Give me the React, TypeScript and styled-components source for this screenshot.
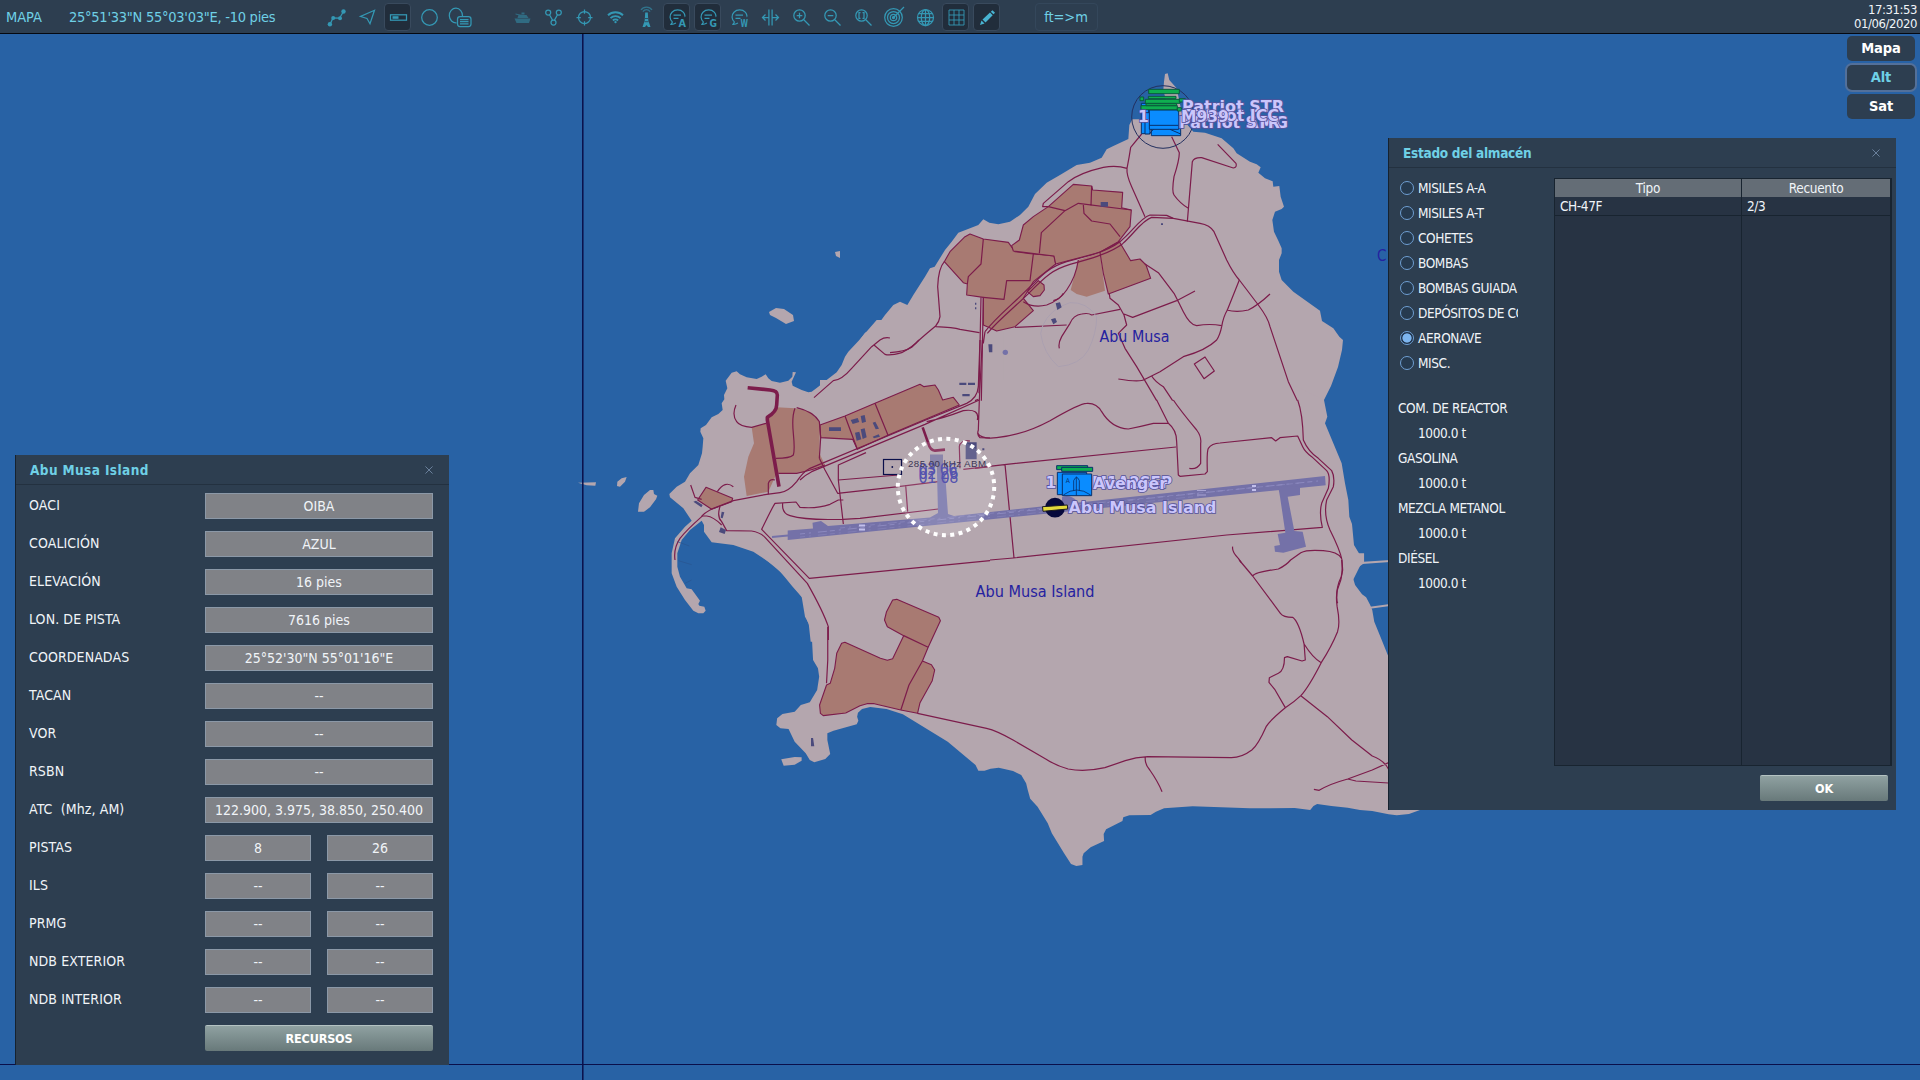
import React from "react";
import styled, { createGlobalStyle, css } from "styled-components";

const sans = `"DejaVu Sans Condensed", "DejaVu Sans", sans-serif`;
const wide = `"DejaVu Sans", sans-serif`;

const c = {
  sea: "#2862a5",
  land: "#b4a6ae",
  urban: "#a87a72",
  road: "#7c1c4b",
  strip: "#7471a8",
  building: "#4b4a7c",
  panel: "#2d3e50",
  panelDark: "#273343",
  teal: "#3498b4",
  title: "#6fd0e6",
};

const Global = createGlobalStyle`
  html, body { margin: 0; background: ${c.sea}; }
  body { overflow: hidden; font-family: ${sans}; font-stretch: condensed; color: #f0f4f8; }
  * { box-sizing: border-box; }
`;

const Screen = styled.div`
  position: relative;
  width: 1920px;
  height: 1080px;
  display: flex;
  flex-direction: column;
  overflow: hidden;
  background: ${c.sea};
`;

/* ---------- toolbar ---------- */

const Toolbar = styled.header`
  position: relative;
  display: flex;
  align-items: center;
  height: 34px;
  flex: none;
  padding: 0 3px 0 6px;
  background: ${c.panel};
  border-bottom: 1px solid #05080f;
`;

const ToolText = styled.span<{ $w: number; $track: number }>`
  width: ${(p) => p.$w}px;
  flex: none;
  color: ${c.title};
  font-size: 14.5px;
  letter-spacing: ${(p) => p.$track}px;
  white-space: nowrap;
`;

const ToolGroup = styled.div<{ $gap: number }>`
  display: flex;
  gap: 4px;
  margin-right: ${(p) => p.$gap}px;
`;

const ToolButton = styled.button<{ $on?: boolean }>`
  width: 27px;
  height: 28px;
  padding: 0;
  display: grid;
  place-items: center;
  border: 1px solid transparent;
  border-radius: 4px;
  background: transparent;
  ${(p) =>
    p.$on &&
    css`
      background: #212d3b;
      border-color: #394a5d;
    `}
  svg {
    overflow: visible;
    display: block;
  }
`;

const UnitButton = styled.button`
  width: 63px;
  height: 28px;
  border: 1px solid #34475b;
  border-radius: 4px;
  background: transparent;
  color: ${c.title};
  font: 14.5px ${sans};
  font-stretch: condensed;
  letter-spacing: -0.1px;
  padding: 0;
`;

const Clock = styled.div`
  margin-left: auto;
  text-align: right;
  font-size: 13px;
  line-height: 14.3px;
  letter-spacing: -0.45px;
  padding-top: 1px;
`;

type IconName =
  | "route" | "arrow" | "label" | "circle" | "note" | "tank" | "nodes" | "aim"
  | "wifi" | "tower" | "chatA" | "chatG" | "chatW" | "split" | "zoomIn"
  | "zoomOut" | "zoomFit" | "target" | "globe" | "grid" | "pencil";

const chat = (letter: string) => (
  <>
    <path d="M-5 4.5C-8 2-8.3-2.500-5.500-5.300C-2.500-8.300 3-8.300 5.700-5.300C7.500-3.300 7.700-1 7-1M-5 4.500L-6.500 6.800C-4 7-2.700 6.200-1.500 5.500M-4-2.500H3.500M-4 .8H1" />
    <text x="1" y="9.300" fontSize="11" fontFamily={sans} fill={c.teal} stroke="none" fontWeight="bold" textLength="7.500" lengthAdjust="spacingAndGlyphs">
      {letter}
    </text>
  </>
);

const glyphs: Record<IconName, React.ReactNode> = {
  route: (
    <>
      <path d="M-6.500 7L-3.500 .5L3 .7L7-6" />
      <g fill={c.teal} stroke="none">
        <circle cx="-6.600" cy="6.800" r="2.200" /><circle cx="-3.300" cy=".5" r="2" />
        <circle cx="3.500" cy=".7" r="2" /><circle cx="7" cy="-6" r="2.200" />
      </g>
    </>
  ),
  arrow: <path d="M7-7.200L2.500 6.300L-.5 1L-7-1Z" />,
  label: (
    <>
      <rect x="-8" y="-2.700" width="16" height="5.400" />
      <path d="M-6 0H0" strokeWidth="2.600" />
    </>
  ),
  circle: <circle r="7.800" />,
  note: (
    <>
      <path d="M-4 5.300A6.600 7.300 0 1 1 2-1.500" />
      <rect x="-3" y="-.8" width="13.500" height="9.800" rx="2.500" />
      <path d="M-.5 2H8M-.5 4.200H8M-.5 6.400H8" />
    </>
  ),
  tank: (
    <g fill={c.teal} stroke="none" opacity=".5">
      <path d="M-8 1H8L6.500 5.500H-6Z" /><path d="M-4-2.500H4L6 .5H-5Z" />
      <path d="M-7-4L0-2.500V-1.300L-7-3ZM-1-5H2V-3H-1Z" />
    </g>
  ),
  nodes: (
    <>
      <circle cx="-5.300" cy="-5" r="2.500" /><circle cx="5.300" cy="-5" r="2.500" /><circle cy="5" r="2.500" />
      <path d="M-4-2.800L-1 2.600M4-2.800L1 2.600" />
    </>
  ),
  aim: (
    <>
      <circle r="6" />
      <path d="M0-8V-3.700M0 8V3.700M-8 0H-3.700M8 0H3.700" />
    </>
  ),
  wifi: (
    <>
      <path d="M-7.500-2.200C-3.300-6.200 3.300-6.200 7.500-2.200M-5 .6C-2.200-2 2.200-2 5 .6M-2.600 3C-1.200 1.700 1.200 1.700 2.600 3" strokeWidth="1.900" />
      <circle cy="4.600" r="1.200" fill={c.teal} stroke="none" />
    </>
  ),
  tower: (
    <>
      <path d="M-5.500-7.500C-3-11.500 3-11.500 5.500-7.500M-3.600-5.800C-1.800-8.500 1.800-8.500 3.600-5.800" opacity=".6" />
      <path d="M-1.300-5H1.300L1.800 3L4 9.500H1.500L0 7.500L-1.500 9.500H-4L-1.800 3Z" fill={c.teal} stroke="none" />
      <path d="M-1.500 1H1.500M-2 4.200H2" stroke={c.panel} strokeWidth=".8" />
    </>
  ),
  chatA: chat("A"),
  chatG: chat("G"),
  chatW: chat("W"),
  split: <path d="M-1.600-8V8M1.600-8V8M-2 0H-8M-5-3L-8 0L-5 3M2 0H8M5-3L8 0L5 3" />,
  zoomIn: (
    <><circle cx="-2" cy="-2" r="5.700" /><path d="M2.300 2.300L8 8M-4.800-2H.8M-2-4.800V.8" /></>
  ),
  zoomOut: (
    <><circle cx="-2" cy="-2" r="5.700" /><path d="M2.300 2.300L8 8M-4.800-2H.8" /></>
  ),
  zoomFit: (
    <><circle cx="-2" cy="-2" r="5.700" /><path d="M2.300 2.300L8 8M-3-4.800H-4.500V.8H-3M-1-4.800H.5V.8H-1" /></>
  ),
  target: (
    <>
      <circle cx="-1" r="8.800" /><circle cx="-1" r="6" /><circle cx="-1" r="3.200" />
      <path d="M-1 0L9.500-10.500" /><circle cx="-1" r="1" fill={c.teal} />
    </>
  ),
  globe: (
    <><circle r="8" /><ellipse rx="4.200" ry="8" /><path d="M-8 0H8M0-8V8M-7-3.800H7M-7 3.800H7" /></>
  ),
  grid: (
    <path d="M-7.500-7.500H7.500V7.500H-7.500ZM-2.500-7.500V7.500M2.500-7.500V7.500M-7.500-2.500H7.500M-7.500 2.500H7.500" strokeWidth=".9" />
  ),
  pencil: (
    <g fill="#48b4d2" stroke="none">
      <path d="M-7.500 7.500L-6 3L-3 6Z" /><path d="M-5 2L2.500-5L5.200-2.300L-2 5Z" /><path d="M3.300-5.800L5-7.300L7.500-4.800L6-3.200Z" />
    </g>
  ),
};

const Icon = ({ name }: { name: IconName }) => (
  <svg width="27" height="27" viewBox="-13.5 -13.5 27 27" fill="none" stroke={c.teal} strokeWidth="1.250">
    {glyphs[name]}
  </svg>
);

const drawTools: [IconName, boolean?][] = [["route"], ["arrow"], ["label", true], ["circle"], ["note"]];
const viewTools: [IconName, boolean?][] = [
  ["tank"], ["nodes"], ["aim"], ["wifi"], ["tower"], ["chatA", true], ["chatG", true], ["chatW"],
  ["split"], ["zoomIn"], ["zoomOut"], ["zoomFit"], ["target"], ["globe"], ["grid", true], ["pencil", true],
];

/* ---------- map ---------- */

const Stage = styled.main`
  position: relative;
  flex: 1;
  min-height: 0;
`;

const MapSvg = styled.svg`
  position: absolute;
  left: 0;
  top: -34px;
  width: 1920px;
  height: 1080px;
  display: block;
`;

const Road = styled.path<{ $w?: number }>`
  fill: none;
  stroke: ${c.road};
  stroke-width: ${(p) => p.$w ?? 1.2}px;
  stroke-linejoin: round;
  vector-effect: non-scaling-stroke;
`;

const Urban = styled.path`
  fill: ${c.urban};
  stroke: ${c.road};
  stroke-width: 1.1px;
  stroke-linejoin: round;
  vector-effect: non-scaling-stroke;
`;

const PlaceLabel = styled.text`
  font: 15px ${sans};
  font-stretch: condensed;
  fill: #2522a0;
`;

const UnitLabel = styled.text`
  font: bold 15.5px ${wide};
  fill: #cbc6fb;
  stroke: #54529c;
  stroke-width: 1.6px;
  paint-order: stroke;
`;

const sheet = {
  north: "translate(900 60) scale(.33333)",
  west: "translate(570 340) scale(.33333)",
  east: "translate(850 400) scale(.33333)",
  south: "translate(760 560) scale(.40816 .33333)",
};

const Land = () => (
  <g fill={c.land}>
    <path transform={sheet.north} d="M-121 840L-105 818L-69 798L-45 765L-20 735L0 725L22 735L40 705L75 650L90 625L104 620L135 570L155 545L175 518L210 505L235 495L250 478L268 488L295 493L330 485L360 465L385 440L405 402L440 368L445 365L480 345L530 315L570 308L605 293L620 268L640 258L685 237L688 195L697 178L740 178L800 130L790 90L792 65L795 42L803 40L808 60L830 85L850 180L880 215L915 218L965 235L985 252L1000 265L1010 280L1050 305L1070 313L1082 322L1075 338L1095 355L1118 364L1120 380L1138 378L1142 410L1152 440L1145 447L1125 455L1117 480L1122 515L1135 542L1145 565L1145 580L1137 600L1137 635L1145 660L1180 695L1260 752L1266 783L1300 805L1318 830L1329 840L1326 870L1314 921L1293 978L1272 1020L1260 1300L-121 1300Z" />
    <path transform={sheet.west} d="M868 0L835 35L825 50L815 75L800 97L770 120L745 140L725 155L715 157L695 150L668 137L665 125L678 97L668 96L667 110L655 122L630 128L605 123L595 115L587 103L575 110L560 117L530 112L510 103L500 94L485 98L467 122L472 145L462 165L463 178L455 190L458 210L445 222L425 232L408 255L392 265L391 275L400 295L398 320L396 340L385 375L360 400L345 425L320 440L298 462L300 472L340 505L365 542L345 560L315 595L305 640L305 700L320 740L345 780L370 812L385 820L400 820L407 812L403 800L388 797L385 792L390 782L365 748L350 745L330 710L322 680L322 640L335 600L360 570L395 542L402 555L402 575L425 607L490 615L550 635L610 675L655 720L695 770L705 830L716 850L722 905L1300 905L1300 -60L920 -60Z" />
    <path transform={sheet.east} d="M-90 -60H1300L1422 0L1432 50L1425 70L1450 130L1475 190L1485 250L1495 300L1498 350L1506 372L1512 435L1539 480L1400 760H-90Z" />
    <path transform={sheet.south} d="M1480 -20L1480 10L1456 30L1452 50L1458 75L1475 103L1485 112L1495 135L1500 150L1505 185L1520 230L1538 285L1600 400L1700 600L1622 748L1590 762L1560 766L1540 763L1500 753L1470 750L1440 743L1400 738L1365 732L1356 738L1348 750L1310 744L1200 745L1060 739L990 745L970 755L957 765L905 766L890 772L888 783L848 808L842 822L843 843L810 862L793 880L790 890L790 915L775 918L762 912L745 880L715 820L705 790L680 740L662 716L656 690L652 670L640 645L620 633L585 623L565 626L550 632L535 632L528 615L460 545L410 508L350 463L310 447L270 441L250 447L240 458L238 470L241 482L237 493L180 512L165 520L165 540L172 582L160 597L133 607L122 600L112 580L85 545L70 507L50 505L40 495L42 475L55 462L85 455L100 435L122 427L140 390L145 350L142 325L130 300L127 230L122 200L115 180L112 150L105 115L80 80L50 35L15 0L0 -20Z" />
    <path transform={sheet.south} d="M52 598L85 591L102 592V602L85 614L58 617Z" />
    <path transform={sheet.west} d="M24 428L78 427L76 437L50 436ZM142 425L155 415L170 411L165 425L150 440L141 438ZM240 450L250 450L252 462L262 467L258 478L240 502L222 515L204 515L207 490L222 465Z" />
    <path d="M769 312L776 308L784 309L793 315L794 321L786 324L776 318L770 315ZM835 252L840 251V258L836 256Z" />
    <path d="M1360 562L1390 560V562L1362 564ZM1368 607L1390 604V606L1368 609Z" />
  </g>
);

const UrbanAreas = () => (
  <>
    <g transform={sheet.north}>
      <path fill={c.urban} d="M535 600L525 640L512 690L530 702L560 710L615 692L600 578Z" />
      <Urban d="M210 522L250 537L325 547L345 575L385 580L462 588L467 612L400 665L370 715L400 752L345 800L290 813L272 805L250 795V712L200 705L202 672L190 668L133 605L150 575L195 530Z" />
      <Urban d="M445 440L520 373L575 378L578 390L668 397L665 443L694 450L690 500L655 545L600 577L467 612L462 588L340 573L335 557L358 540L370 495L400 470Z" />
      <Urban d="M600 577L658 545L692 602L720 597L738 615L752 655L625 702L610 640Z" />
      <Urban d="M382 695L415 662L432 675L433 690L420 707L400 710Z" />
      <Road d="M250 537L243 612L205 650L202 672M400 582L390 662L320 662L312 718L250 712M445 440L495 452L535 430L694 450M575 378L573 437M418 580L424 518L495 452M550 435L552 460L575 483L630 492L660 530" />
    </g>
    <g transform={sheet.west}>
      <path fill={c.urban} d="M620 202L675 205L720 215L750 250L748 340L765 375L700 398L620 400L595 455L530 468L522 410L535 350L552 310L545 262L590 250L600 225Z" />
      <Urban d="M750 255L825 228L915 190L1050 133L1062 140L1095 135L1105 150L1118 180L1150 172L1168 195L955 285L862 328L848 298L752 293Z" />
      <Road d="M825 228L862 328M915 190L955 288" />
      <Urban d="M383 480L408 442L488 475L485 485L425 508Z" />
    </g>
    <g transform={sheet.south}>
      <Urban d="M325 120L335 118L438 172L442 182L412 262L398 303L420 314L428 330L422 362L392 428L386 460L345 450L280 431L262 431L245 437L210 459L155 467L148 460L146 435L163 375L172 370L183 325L188 280L200 250L208 247L295 295L312 301L325 296L352 227L312 200L305 180L310 155Z" />
      <Road d="M352 227L412 262M398 303L365 375L345 450" />
    </g>
  </>
);

const Roads = () => (
  <>
    <g transform={sheet.north}>
      <Road d="M725 222L692 262Q688 290 681 325Q679 345 695 380L735 470M681 325Q650 315 610 322Q540 338 505 365L430 430L428 440L445 440M815 230L838 278Q838 300 822 350Q815 395 822 405Q840 430 865 445M862 485L877 305Q882 292 905 293L1000 324Q1012 322 1008 310L953 253" />
      <Road d="M255 815C290 770 330 740 375 695C430 640 450 620 500 605C560 590 620 575 660 545C700 512 720 475 750 465L800 466L820 475L900 490Q930 495 942 515L980 600Q1000 640 1018 660L1075 735Q1105 775 1110 800L1165 965L1192 1022" />
      <Road d="M262 820C300 775 340 745 383 703C440 645 460 628 510 613C570 597 630 580 668 551C705 518 725 482 755 472L820 475" />
      <Road d="M243 712L237 1000M250 712L244 1022M255 815L250 850M133 605Q115 625 113 680L120 770Q118 785 107 798Q50 845 35 862Q15 875 -30 878M107 800Q160 802 180 808L238 818" />
      <Road d="M535 600Q528 650 500 690Q480 720 440 735Q400 745 370 725M345 802L500 795M478 865Q474 850 485 830L510 790Q520 765 545 762Q565 758 575 765L660 748" />
      <Road d="M460 722Q480 718 490 700M628 702L630 715L655 735L672 765L680 795L655 820L675 865L710 920L770 1022M672 762L698 772L830 722L885 693M735 612L775 638L822 700Q835 725 850 755Q870 795 890 797Q930 790 965 797" />
      <Road d="M1018 660L982 750Q970 770 965 800Q960 825 950 840Q920 870 850 890L780 935L735 958Q720 968 655 957M980 750Q1010 758 1045 750Q1075 735 1110 702M755 948Q765 965 790 980L818 1022M883 912L915 891L943 933L912 956Z" />
      <path d="M480 740Q430 770 422 820Q430 880 475 920Q540 915 565 870Q590 820 590 770Q560 725 510 728Z" fill="none" stroke="#aba0b0" strokeWidth="3" />
    </g>
    <g transform={sheet.west}>
      <Road d="M732 173L790 122Q815 120 845 85L905 20L960 38M912 15Q930 -2 960 38M905 20Q930 0 960 2" opacity="0" />
      <Road d="M732 173L790 122Q815 120 845 85L905 20L930 0Q945 -10 960 -6M912 15L945 43Q960 48 995 38Q1030 20 1047 0" />
      <Road d="M1230 0L1225 140Q1222 175 1190 190L1060 243L720 385Q700 395 680 425Q655 455 630 458L590 463L490 482L430 505Q400 520 395 530Q350 570 330 595Q310 625 315 660" />
      <Road d="M1237 0L1228 180L1065 253L725 395Q705 405 690 420M1228 180L1225 270Q1220 285 1230 293L1260 294M1070 245Q1120 235 1180 212Q1230 205 1222 240M888 338L805 375V420L820 552M805 420L985 405M1215 385L1260 380M748 355L765 390L803 460L985 440L1105 425M1007 435L1013 515M1105 507L870 535Q720 545 660 527Q635 520 638 490M820 480L805 480L780 493Q740 507 690 502L678 486L615 490Q608 500 575 568L718 715L1260 662" />
      <Road d="M450 500Q440 530 455 545L470 572L545 573Q570 577 585 592L712 730Q760 815 775 860V900M395 528H410Q430 530 455 555M498 195Q485 225 500 245Q510 260 545 262L588 250M675 205Q665 230 670 280Q675 330 670 345Q660 355 618 355M680 203Q730 215 748 245L752 293L748 355M625 400L680 400Q730 390 765 375M362 435L375 472L395 478M442 455Q465 420 490 440M595 463V430Q600 415 615 420M1170 385L1168 320Q1170 300 1200 303M1215 182L1225 178" />
      <Road $w={3.6} d="M533 143L600 150Q622 152 622 165L620 195Q620 215 592 232V240L627 440" />
      <Road $w={2.6} d="M1058 262L1075 310Q1080 330 1095 332L1125 329" />
    </g>
    <g transform={sheet.east}>
      <Road d="M383 100Q395 118 440 113Q520 105 600 62Q690 10 710 10Q740 8 755 35Q785 85 835 87Q870 80 910 70L955 70M920 0L955 70Q980 90 980 125L985 225L990 229L1065 222L1072 215Q1070 155 1075 145Q1085 130 1110 129L1265 113L1277 123L1290 113L1343 108L1358 140Q1365 155 1385 170L1430 212Q1442 225 1435 265L1415 310Q1407 340 1417 382L1130 405L490 474L420 480M970 0Q990 30 1040 90Q1055 110 1052 130L1052 190Q1040 210 1018 205M1343 0Q1358 40 1360 120Q1375 155 1405 175L1445 212Q1455 230 1450 260L1430 300Q1420 345 1440 390Q1470 450 1476 480L1478 510Q1475 540 1462 570Q1458 600 1463 610M340 208L470 193L978 141M465 193L492 474M1148 440Q1145 455 1165 475L1174 488" />
    </g>
    <g transform={sheet.south}>
      <Road d="M166 200V300L163 370M1425 0Q1428 30 1424 50Q1408 90 1414 140Q1422 190 1415 215Q1400 260 1375 308Q1345 380 1325 407Q1310 425 1287 443Q1250 480 1240 500Q1220 555 1205 570Q1180 593 1155 593L950 590Q920 592 895 602L845 623Q795 637 755 627Q725 617 700 597L620 540Q580 512 555 505L386 460M1174 0L1207 48L1275 160Q1282 172 1305 172Q1320 185 1333 252L1336 300L1328 303L1292 290L1285 293Q1285 330 1270 340L1248 353L1247 367L1262 390L1287 443M1333 252Q1355 295 1375 308M1325 407L1390 470L1450 540L1500 588Q1530 602 1540 628M944 592Q942 612 955 630Q975 665 985 695M1357 688L1370 691Q1395 672 1440 657L1500 630L1540 608M1440 657L1460 663L1540 669M1207 48Q1212 37 1270 27Q1290 15 1300 0L1325 -22Q1340 -32 1380 -28Q1415 -25 1425 -5" />
    </g>
  </>
);

const Buildings = () => (
  <g fill={c.building}>
    <g transform={sheet.north}>
      <path d="M602 426H624V440H602ZM467 730L480 727L485 742L472 750ZM453 778L466 774L471 786L460 793ZM265 853H277V877H267ZM178 968H199V975H178ZM204 968H225V975H204ZM187 1002H209V1009H187ZM225 728H229V734H225ZM225 742H229V748H225ZM783 490H789V495H783Z" />
      <circle cx="316" cy="877" r="8" fill={c.strip} />
    </g>
    <g transform={sheet.west}>
      <path d="M777 262H813V273H777ZM842 240L863 234L868 246L848 252ZM872 228L884 225L888 245L876 249ZM855 278L868 275L874 298L860 302ZM872 268L884 265L890 292L878 297ZM908 248L916 245L927 266L917 268ZM908 290L926 283L930 290L912 295ZM370 485L378 482L398 495L394 502ZM455 515L463 517L458 535L452 533ZM452 562L468 570L464 582L447 576ZM1187 307H1220V358H1187ZM1237 325H1243V331H1237Z" />
      <path d="M322 605L358 618M325 662L365 674M345 730L365 720" stroke="#28548f" strokeWidth="2" />
    </g>
    <path transform={sheet.south} d="M125 534L130 534L133 559L125 559Z" />
  </g>
);

const Runway = () => (
  <g fill={c.strip}>
    <path d="M787.700 530.500L813 528.500L812.500 522.700L821 521L828 526L930 517.500L938 513L937 472L945 472L948 514L954 516L1325 476L1325.700 485.300L787.700 540Z" />
    <path d="M772 537L788 535.500" stroke={c.strip} strokeWidth="2" />
    <path d="M930 454.500H943V473H937V466H930Z" fill="#77719c" />
    <path d="M1062 497Q1070 494 1077 501L1075 506H1062Z" />
    <path transform={sheet.east} d="M1285 262L1350 258V285L1313 290L1333 393L1358 395L1368 440L1300 458L1275 455L1273 438L1290 435L1283 402L1306 398L1290 290Z" />
    <g stroke="#9794c8" strokeWidth=".7" strokeDasharray="5 4 2 7 9 3">
      <path d="M800 534L1318 481" /><path d="M840 528L1300 483" opacity=".7" /><path d="M800 537L1200 496" opacity=".5" />
    </g>
    <path d="M859 525.500H865M859 529.500H865M1252 486H1256M1252 490H1256" stroke="#c2bfec" strokeWidth="2" />
    <path d="M1197 490.500H1206M1197 495H1206" stroke="#a8a4d4" strokeWidth="1" />
  </g>
);

const Units = () => (
  <>
    <circle cx="1163" cy="117" r="31.300" fill="none" stroke="#24305f" strokeWidth="1" />
    <g transform={sheet.north} stroke="#08306a" strokeWidth="3" fill="#0a8cff">
      <path d="M724 130H746V221H724Z" /><path d="M735 158H750V222H735Z" /><path d="M754 205H842V227H754Z" />
      <path d="M748 150H836V208H748Z" /><path d="M748 196H836M760 208L748 222M810 208L842 222" />
      <g fill="#0fae50" stroke="#0a5a3c">
        <path d="M745 109H828V116H745Z" /><path d="M720 111H731V122H720Z" /><path d="M736 118H840V130H736Z" /><path d="M838 116H856V126H838Z" />
        <path d="M723 137H832V149H723Z" /><path d="M738 131H830V137H738Z" /><path d="M746 88H838V101H746Z" /><path d="M832 143H844V153H832Z" />
      </g>
    </g>
    <UnitLabel x="1138" y="121.500">1</UnitLabel>
    <UnitLabel x="1178" y="127.500" textLength="110" lengthAdjust="spacingAndGlyphs">Patriot AMG</UnitLabel>
    <UnitLabel x="1179" y="128" textLength="101" lengthAdjust="spacingAndGlyphs">Patriot STR</UnitLabel>
    <UnitLabel x="1182" y="111.500" textLength="102" lengthAdjust="spacingAndGlyphs">Patriot STR</UnitLabel>
    <UnitLabel x="1183" y="121" textLength="96" lengthAdjust="spacingAndGlyphs">Patriot ICC</UnitLabel>
    <UnitLabel x="1181" y="121.500">M939</UnitLabel>

    <UnitLabel x="1045.500" y="488">1</UnitLabel>
    <UnitLabel x="1092" y="487.500" textLength="80" lengthAdjust="spacingAndGlyphs">M1A2SEP</UnitLabel>
    <UnitLabel x="1093" y="489" textLength="74" lengthAdjust="spacingAndGlyphs">Avenger</UnitLabel>
    <g transform={sheet.east} stroke="#08306a" strokeWidth="3">
      <g fill="#0fae50"><path d="M620 197H713V209H620Z" /><path d="M635 202H728V214H635Z" /></g>
      <g fill="#0a8cff"><path d="M622 217H710V284H622Z" /><path d="M637 222H725V287H637Z" /></g>
      <path d="M640 285Q680 255 722 285M671 273V242Q680 222 688 242V273M679 230V287" fill="none" strokeWidth="2.500" />
      <text x="647" y="248" fontSize="20" fontFamily={sans} fill="#08306a" stroke="none">A</text>
    </g>
    <circle cx="1055" cy="507.700" r="9.900" fill="#06093c" />
    <path d="M1042.500 506.700L1067.300 505L1067.700 509L1043 511.300Z" fill="#e3da3c" stroke="#1c1c20" strokeWidth="1" />
    <UnitLabel x="1068.500" y="513" textLength="148" lengthAdjust="spacingAndGlyphs">Abu Musa Island</UnitLabel>
  </>
);

const MapLayer = () => (
  <MapSvg viewBox="0 0 1920 1080">
    <Land />
    <UrbanAreas />
    <Roads />
    <Buildings />
    <Runway />
    <circle cx="946" cy="487" r="48.500" fill="#fff" fillOpacity=".14" />
    <g fill="none" stroke="#0a0f4a">
      <path d="M582.800 34V1080" strokeWidth="1.500" /><path d="M0 1064.500H1920" strokeWidth="1" />
      <rect x="883.500" y="459.500" width="18" height="15" strokeWidth="1.200" />
    </g>
    <circle cx="892.300" cy="467" r=".9" fill="#0a0f4a" />
    <PlaceLabel x="1099.500" y="341.500" textLength="70" lengthAdjust="spacingAndGlyphs">Abu Musa</PlaceLabel>
    <PlaceLabel x="975.500" y="596.500" textLength="119" lengthAdjust="spacingAndGlyphs">Abu Musa Island</PlaceLabel>
    <PlaceLabel x="1377" y="260.500">C</PlaceLabel>
    <g fontFamily={sans} fontSize="16" fill="#5452ae">
      <text x="918.500" y="483" textLength="40">01 08</text>
      <text x="918.500" y="478.500" textLength="40">02 26</text>
      <text x="918.500" y="475" textLength="39">03 06</text>
    </g>
    <text x="908" y="467.300" fontSize="9.700" fontFamily="'Liberation Sans', Arial, sans-serif" fill="#3b3654" textLength="78">
      285.00 kHz ABM
    </text>
    <circle cx="946" cy="487" r="48.200" fill="none" stroke="#fff" strokeWidth="4" strokeDasharray="4 4.412" />
    <Units />
  </MapSvg>
);

/* ---------- windows ---------- */

const Window = styled.section<{ $x: number; $y: number; $w: number; $h: number }>`
  position: absolute;
  left: ${(p) => p.$x}px;
  top: ${(p) => p.$y}px;
  width: ${(p) => p.$w}px;
  height: ${(p) => p.$h}px;
  display: flex;
  flex-direction: column;
  background: ${c.panel};
  border-left: 1px solid #16222f;
`;

const TitleBar = styled.div<{ $track: number }>`
  height: 30px;
  flex: none;
  display: flex;
  align-items: center;
  justify-content: space-between;
  padding: 0 16px 0 14px;
  border-bottom: 1px solid #233140;
  color: ${c.title};
  font: bold 13.5px ${sans};
  font-stretch: condensed;
  letter-spacing: ${(p) => p.$track}px;
`;

const Close = () => (
  <svg width="8" height="8" viewBox="0 0 9 9" stroke="#7288a5" strokeWidth="1">
    <path d="M.5 .5L8.500 8.500M8.500 .5L.5 8.500" />
  </svg>
);

const raised = css`
  border: 0;
  border-top: 1px solid #b4c2c2;
  border-radius: 2px;
  background: linear-gradient(#8fa1a1, #68797a);
  color: #fff;
  font: bold 12.5px ${sans};
  font-stretch: condensed;
  letter-spacing: -0.15px;
`;

const InfoBody = styled.div`
  display: flex;
  flex-direction: column;
  gap: 12px;
  padding: 8px 16px 0 13px;
`;

const InfoRow = styled.div`
  display: grid;
  grid-template-columns: 176px 228px;
  height: 26px;
  align-items: center;
`;

const InfoLabel = styled.span`
  font-size: 14px;
  letter-spacing: 0.1px;
  padding-bottom: 2px;
  white-space: pre;
`;

const Fields = styled.div`
  display: flex;
  gap: 16px;
`;

const Field = styled.div`
  flex: 1;
  height: 26px;
  line-height: 25px;
  text-align: center;
  font-size: 14px;
  background: #808287;
  border: 1px solid #8b98a7;
  white-space: nowrap;
`;

const ResourcesButton = styled.button`
  ${raised}
  grid-column: 2;
  height: 26px;
`;

const info: [string, string[]][] = [
  ["OACI", ["OIBA"]],
  ["COALICIÓN", ["AZUL"]],
  ["ELEVACIÓN", ["16 pies"]],
  ["LON. DE PISTA", ["7616 pies"]],
  ["COORDENADAS", [`25°52'30"N 55°01'16"E`]],
  ["TACAN", ["--"]],
  ["VOR", ["--"]],
  ["RSBN", ["--"]],
  ["ATC  (Mhz, AM)", ["122.900, 3.975, 38.850, 250.400"]],
  ["PISTAS", ["8", "26"]],
  ["ILS", ["--", "--"]],
  ["PRMG", ["--", "--"]],
  ["NDB EXTERIOR", ["--", "--"]],
  ["NDB INTERIOR", ["--", "--"]],
];

const StockBody = styled.div`
  flex: 1;
  display: grid;
  grid-template-columns: 165px 338px;
  padding-top: 10px;
  align-content: start;
  align-items: start;
  font-size: 13.5px;
  letter-spacing: -0.4px;
`;

const Side = styled.div`
  padding-left: 9px;
  margin-top: -2.5px;
`;

const Option = styled.label`
  display: flex;
  align-items: center;
  gap: 4px;
  width: 120px;
  height: 25px;
  overflow: hidden;
  white-space: nowrap;
  padding-left: 2px;
`;

const Dot = styled.i<{ $on?: boolean }>`
  width: 14px;
  height: 14px;
  flex: none;
  border: 1px solid #6f9fd3;
  border-radius: 50%;
  background: ${(p) => (p.$on ? "radial-gradient(circle, #7db5ef 0 4.2px, #1d3048 5px)" : "#263a4f")};
`;

const Fuel = styled.dl`
  margin: 20.5px 0 0;
  line-height: 25px;
  dd {
    margin: 0 0 0 20px;
  }
`;

const Table = styled.div`
  display: grid;
  grid-template-columns: 187px 1fr;
  grid-template-rows: 18px 19px 1fr;
  height: 588px;
  background: ${c.panelDark};
  border: 1px solid #182430;
  border-right-width: 2px;
`;

const Cell = styled.div<{ $head?: boolean; $rule?: boolean }>`
  padding-left: 5px;
  line-height: 18px;
  &:nth-child(odd) {
    border-right: 1px solid #182430;
  }
  ${(p) => p.$rule && css`border-bottom: 1px solid #182430;`}
  ${(p) =>
    p.$head &&
    css`
      padding: 0;
      text-align: center;
      background: #646d76;
      letter-spacing: -0.3px;
    `}
`;

const Footer = styled.div`
  display: flex;
  justify-content: flex-end;
  padding: 0 8px 9px 0;
`;

const OkButton = styled.button`
  ${raised}
  width: 128px;
  height: 26px;
`;

const options = ["MISILES A-A", "MISILES A-T", "COHETES", "BOMBAS", "BOMBAS GUIADA", "DEPÓSITOS DE CO", "AERONAVE", "MISC."];
const fuels = ["COM. DE REACTOR", "GASOLINA", "MEZCLA METANOL", "DIÉSEL"];

const Modes = styled.nav`
  position: absolute;
  right: 5px;
  top: 2px;
  width: 68px;
  display: flex;
  flex-direction: column;
  gap: 4px;
`;

const Mode = styled.button<{ $on?: boolean }>`
  height: 25px;
  border: 0;
  border-radius: 5px;
  background: ${c.panel};
  color: ${(p) => (p.$on ? c.title : "#fff")};
  box-shadow: ${(p) => (p.$on ? "0 0 0 2px #53709a" : "none")};
  font: bold 14.5px ${sans};
  font-stretch: condensed;
  letter-spacing: -0.1px;
  padding: 0 0 1px;
`;

export default function App() {
  return (
    <Screen>
      <Global />
      <Toolbar>
        <ToolText $w={63} $track={-0.05}>MAPA</ToolText>
        <ToolText $w={252.5} $track={-0.26}>25°51'33"N 55°03'03"E, -10 pies</ToolText>
        <ToolGroup $gap={35}>
          {drawTools.map(([n, on]) => (
            <ToolButton key={n} $on={on}><Icon name={n} /></ToolButton>
          ))}
        </ToolGroup>
        <ToolGroup $gap={35}>
          {viewTools.map(([n, on]) => (
            <ToolButton key={n} $on={on}><Icon name={n} /></ToolButton>
          ))}
        </ToolGroup>
        <UnitButton>ft=&gt;m</UnitButton>
        <Clock>
          <div>17:31:53</div>
          <div>01/06/2020</div>
        </Clock>
      </Toolbar>

      <Stage>
        <MapLayer />

        <Modes>
          <Mode>Mapa</Mode>
          <Mode $on>Alt</Mode>
          <Mode>Sat</Mode>
        </Modes>

        <Window $x={15} $y={421} $w={434} $h={610}>
          <TitleBar $track={0.4}>Abu Musa Island<Close /></TitleBar>
          <InfoBody>
            {info.map(([label, values]) => (
              <InfoRow key={label}>
                <InfoLabel>{label}</InfoLabel>
                <Fields>{values.map((v, i) => <Field key={i}>{v}</Field>)}</Fields>
              </InfoRow>
            ))}
            <InfoRow><ResourcesButton>RECURSOS</ResourcesButton></InfoRow>
          </InfoBody>
        </Window>

        <Window $x={1388} $y={104} $w={508} $h={672}>
          <TitleBar $track={-0.28}>Estado del almacén<Close /></TitleBar>
          <StockBody>
            <Side>
              {options.map((o) => (
                <Option key={o}><Dot $on={o === "AERONAVE"} />{o}</Option>
              ))}
              <Fuel>
                {fuels.map((f) => (
                  <React.Fragment key={f}><dt>{f}</dt><dd>1000.0 t</dd></React.Fragment>
                ))}
              </Fuel>
            </Side>
            <Table>
              <Cell $head>Tipo</Cell><Cell $head>Recuento</Cell>
              <Cell $rule>CH-47F</Cell><Cell $rule>2/3</Cell>
              <Cell /><Cell />
            </Table>
          </StockBody>
          <Footer><OkButton>OK</OkButton></Footer>
        </Window>
      </Stage>
    </Screen>
  );
}
